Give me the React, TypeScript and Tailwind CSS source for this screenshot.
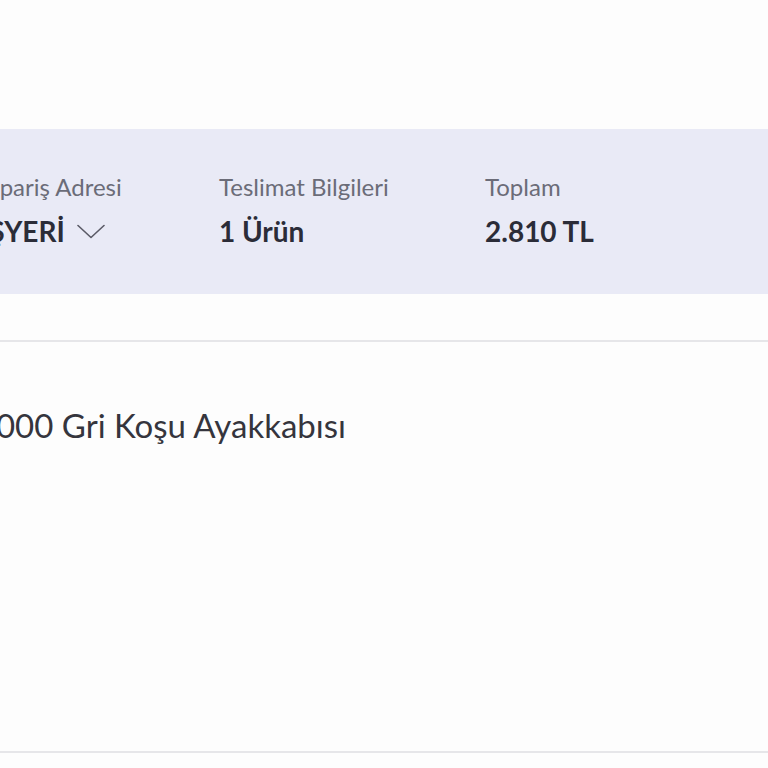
import React from "react";

type Info = { label: string; value: string; chevron?: boolean };

const infos: Info[] = [
  { label: "Sipariş Adresi", value: "İŞYERİ", chevron: true },
  { label: "Teslimat Bilgileri", value: "1 Ürün" },
  { label: "Toplam", value: "2.810 TL" },
];

function Chevron() {
  return (
    <svg width="28" height="15" viewBox="0 0 28 15" fill="none" className="ml-3">
      <path d="M1 1.5 L14 13.5 L27 1.5" stroke="#5a5a66" strokeWidth="1.6" strokeLinecap="round" strokeLinejoin="round" />
    </svg>
  );
}

export default function App() {
  return (
    <div className="h-screen w-full overflow-hidden bg-[#fdfdfd] font-['Lato',sans-serif]">
      <div className="h-[129px]" />

      <section className="h-[165px] overflow-hidden bg-[#e9eaf6] pt-[44px]">
        <div className="-ml-[19px] grid grid-cols-[238px_266px_auto]">
          {infos.map((info) => (
            <div key={info.label} className="flex flex-col whitespace-nowrap">
              <span className="text-[24px] leading-[28px] text-[#6b6c78]">{info.label}</span>
              <div className="mt-[14px] flex h-[32px] items-center">
                <span className="text-[28px] font-bold leading-[32px] text-[#2b2c38]">{info.value}</span>
                {info.chevron && <Chevron />}
              </div>
            </div>
          ))}
        </div>
      </section>

      <div className="mt-[46px] border-t-2 border-[#e6e6e9]" />

      <section className="h-[409px] overflow-hidden pt-[64px]">
        <p className="-ml-[160px] whitespace-nowrap text-[33px] leading-[38px] text-[#35353d]">
          Asics GT-2000 Gri Koşu Ayakkabısı
        </p>
      </section>

      <div className="border-t-2 border-[#e6e6e9]" />
    </div>
  );
}
